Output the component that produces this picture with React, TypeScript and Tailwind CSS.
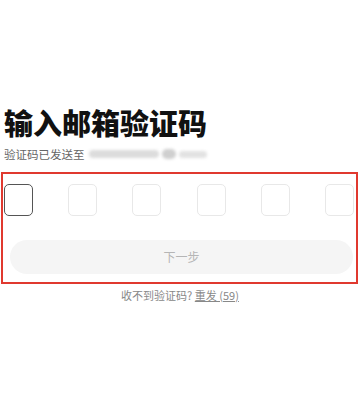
import React, { useState } from 'react';

const CJK = { fontFamily: '"Noto Sans CJK SC", "Noto Sans", sans-serif' };

export default function App() {
  const [code] = useState(['', '', '', '', '', '']);
  const [focus] = useState(0);

  return (
    <div className="min-h-[393px] w-[360px] bg-white" style={CJK}>
      <div className="pt-[104px]">
        <h1 className="pl-[4px] text-[29px] leading-[36px] font-black text-[#111]">输入邮箱验证码</h1>
        <div className="mt-[6px] flex items-center pl-[4px] text-[11.5px] leading-[16px] text-[#666]">
          <span>验证码已发送至</span>
          {/* masked address */}
          <span className="ml-[4px] flex items-center gap-[3px] blur-[1.5px]">
            <span className="h-[8px] w-[70px] rounded-full bg-[#dcdcdc]" />
            <span className="h-[10px] w-[14px] rounded-full bg-[#cfcfcf]" />
            <span className="h-[7px] w-[28px] rounded-full bg-[#e2e2e2]" />
          </span>
        </div>

        <div className="mt-[10px] ml-[1px] w-[357px] border-2 border-[#e0392f] pt-[10px] pb-[8px]">
          <div className="flex justify-between pl-[1px] pr-[2px]">
            {code.map((v, i) => (
              <div
                key={i}
                className={
                  i === focus
                    ? 'h-[32px] w-[29px] rounded-[5px] border-[1.5px] border-[#555]'
                    : 'h-[32px] w-[29px] rounded-[5px] border border-[#e8e8e8]'
                }
              >
                {v}
              </div>
            ))}
          </div>
          <button
            disabled
            className="mt-[24px] ml-[7px] flex h-[34px] w-[343px] items-center justify-center rounded-full bg-[#f5f5f5] text-[12px] text-[#b5b5b5]"
          >
            下一步
          </button>
        </div>

        <p className="mt-[4px] text-center text-[11px] leading-[14px] text-[#888]">
          收不到验证码? <span className="underline">重发 (59)</span>
        </p>
      </div>
    </div>
  );
}
